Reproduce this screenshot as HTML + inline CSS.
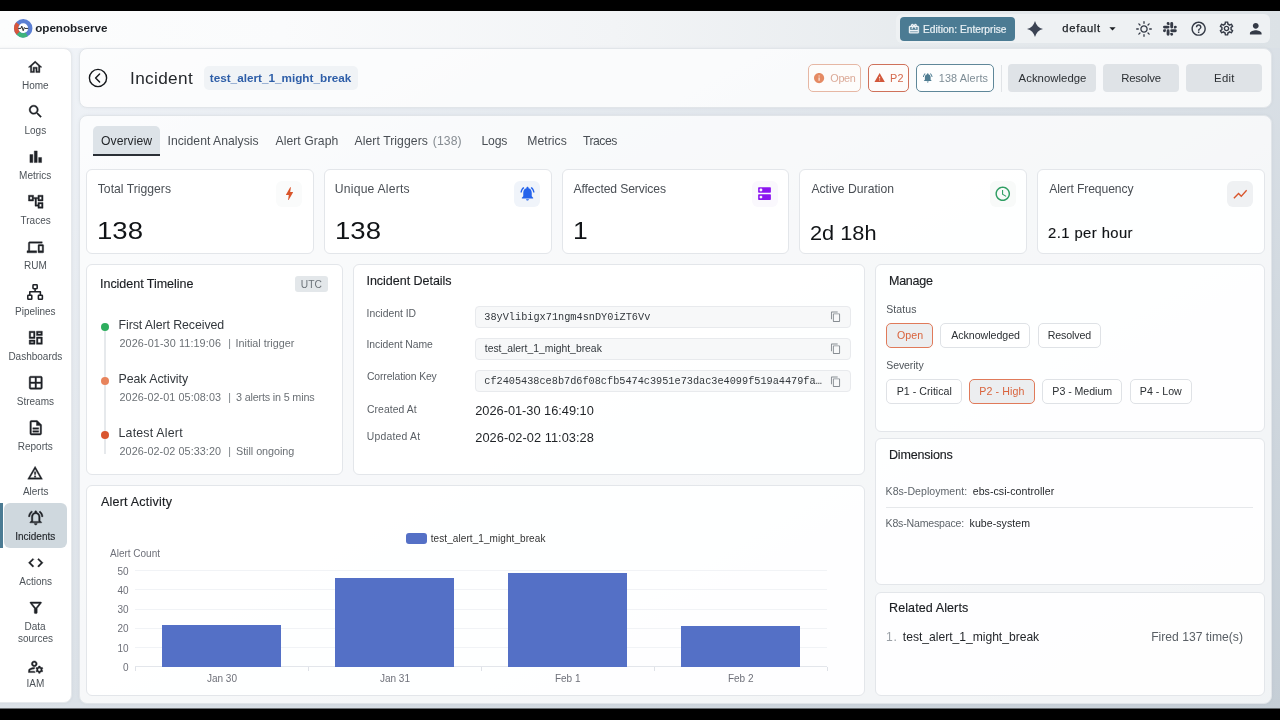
<!DOCTYPE html>
<html lang="en">
<head>
<meta charset="utf-8">
<title>Incident - OpenObserve</title>
<style>
html,body{margin:0;padding:0;background:#000;}
body{width:1280px;height:720px;overflow:hidden;font-family:"Liberation Sans",Arial,sans-serif;}
#app{will-change:transform;position:relative;width:1280px;height:720px;overflow:hidden;background:#000;}
.b{position:absolute;box-sizing:border-box;}
.i{position:absolute;display:block;overflow:visible;}
.t{position:absolute;white-space:nowrap;line-height:1.2;margin:0;padding:0;font-weight:400;}
.card{background:rgba(255,255,255,.9);border:1px solid #e3e6ea;border-radius:6px;}
.btn{border-radius:5px;border:1px solid #dfe2e6;background:#fff;}

</style>
</head>
<body>
<div id="app">
<div class="b " style="left:0px;top:11px;width:1280px;height:698px;background:linear-gradient(150deg,#f2f5f9 0%,#c5ced6 100%);"></div>
<div class="b " style="left:0px;top:11px;width:1280px;height:37px;background:linear-gradient(90deg,#fcfdfd 0%,#fafbfc 22%,#f2f4f6 48%,#e7ebee 72%,#dce2e6 100%);"></div>
<div class="b " style="left:896px;top:14px;width:374px;height:29px;background:#eef1f3;border-radius:6px;"></div>
<svg class="i" style="left:14.1px;top:19.4px" width="18.4" height="18.4" viewBox="0 0 40 40">
<circle cx="20" cy="20" r="15.4" fill="#fff"/>
<circle cx="20" cy="20" r="15.4" fill="none" stroke="#5b7fd3" stroke-width="9.5"/>
<path d="M8.2 10.1 A15.4 15.4 0 0 0 9.1 30.9" fill="none" stroke="#d9563a" stroke-width="9.5"/>
<path d="M9.1 30.9 A15.4 15.4 0 0 0 27.7 33.3" fill="none" stroke="#3fb47c" stroke-width="9.5"/>
<path d="M10 20.5h5l2-5 3 10 2.5-7 1.5 2h6" fill="none" stroke="#1a1a1a" stroke-width="2" stroke-linejoin="round" stroke-linecap="round"/>
</svg>
<span class="t" style="left:35.20px;top:20.60px;font-size:11.7px;color:#1c2025;font-weight:700;letter-spacing:-0.045px;">openobserve</span>
<div class="b " style="left:900px;top:17px;width:115px;height:23.5px;background:#4b7b93;border-radius:4px;"></div>
<svg class="i" style="left:908.1px;top:23.1px" width="11.8" height="11.8" viewBox="0 0 24 24" fill="#eef4f7" stroke="#eef4f7" stroke-width="0.7"><path d="M20 6h-2.18c.11-.31.18-.65.18-1 0-1.66-1.34-3-3-3-1.05 0-1.96.54-2.5 1.35l-.5.67-.5-.68C10.960 2.540 10.050 2 9 2 7.340 2 6 3.340 6 5c0 .35.070.69.180 1H4c-1.110 0-1.990.890-1.990 2L2 19c0 1.110.890 2 2 2h16c1.110 0 2-.890 2-2V8c0-1.110-.890-2-2-2zm-5-2c.55 0 1 .45 1 1s-.45 1-1 1-1-.45-1-1 .45-1 1-1zM9 4c.55 0 1 .45 1 1s-.45 1-1 1-1-.45-1-1 .45-1 1-1zm11 15H4v-2h16v2zm0-5H4V8h5.080L7 10.830 8.620 12 11 8.760l1-1.360 1 1.360L15.380 12 17 10.830 14.920 8H20v6z"/></svg>
<span class="t" style="left:923.05px;top:23.70px;font-size:10.22px;color:#eaf1f5;-webkit-text-stroke:0.2px #eaf1f5;letter-spacing:-0.003px;">Edition: Enterprise</span>
<svg class="i" style="left:1027.3px;top:20.7px" width="16" height="16" viewBox="0 0 24 24" fill="#3b4353"><path d="M12 0 C13.6 6.3 17.7 10.4 24 12 C17.7 13.6 13.6 17.7 12 24 C10.4 17.7 6.3 13.6 0 12 C6.3 10.4 10.4 6.3 12 0Z"/></svg>
<span class="t" style="left:1062.25px;top:22.40px;font-size:11.2px;color:#1b1e23;-webkit-text-stroke:0.25px #1b1e23;letter-spacing:0.717px;">default</span>
<svg class="i" style="left:1105.3px;top:20.8px" width="15" height="15" viewBox="0 0 24 24" fill="#1b1e23" ><path d="M7 10l5 5 5-5z"/></svg>
<svg class="i" style="left:1135.9px;top:20.5px" width="16" height="16" viewBox="-8 -8 16 16" fill="none" stroke="#343a46" stroke-width="1.3" stroke-linecap="round"><circle r="3.1"/><path d="M0 -5.7V-7.3M0 5.7V7.3M-5.7 0H-7.3M5.7 0H7.3M4.03 -4.03L5.16 -5.16M-4.03 -4.03L-5.16 -5.16M4.03 4.03L5.16 5.16M-4.03 4.03L-5.16 5.16"/></svg>
<svg class="i" style="left:1163.1px;top:21.6px" width="13.8" height="13.8" viewBox="0 0 24 24" fill="#343a46"><path d="M5.042 15.165a2.528 2.528 0 0 1-2.52 2.523A2.528 2.528 0 0 1 0 15.165a2.527 2.527 0 0 1 2.522-2.52h2.52v2.52zM6.313 15.165a2.527 2.527 0 0 1 2.521-2.52 2.527 2.527 0 0 1 2.521 2.52v6.313A2.528 2.528 0 0 1 8.834 24a2.528 2.528 0 0 1-2.521-2.522v-6.313zM8.834 5.042a2.528 2.528 0 0 1-2.521-2.52A2.528 2.528 0 0 1 8.834 0a2.528 2.528 0 0 1 2.521 2.522v2.52H8.834zM8.834 6.313a2.528 2.528 0 0 1 2.521 2.521 2.528 2.528 0 0 1-2.521 2.521H2.522A2.528 2.528 0 0 1 0 8.834a2.528 2.528 0 0 1 2.522-2.521h6.312zM18.956 8.834a2.528 2.528 0 0 1 2.522-2.521A2.528 2.528 0 0 1 24 8.834a2.528 2.528 0 0 1-2.522 2.521h-2.522V8.834zM17.688 8.834a2.528 2.528 0 0 1-2.523 2.521 2.527 2.527 0 0 1-2.52-2.521V2.522A2.527 2.527 0 0 1 15.165 0a2.528 2.528 0 0 1 2.523 2.522v6.312zM15.165 18.956a2.528 2.528 0 0 1 2.523 2.522A2.528 2.528 0 0 1 15.165 24a2.527 2.527 0 0 1-2.52-2.522v-2.522h2.52zM15.165 17.688a2.527 2.527 0 0 1-2.52-2.523 2.526 2.526 0 0 1 2.52-2.520h6.313A2.527 2.527 0 0 1 24 15.165a2.528 2.528 0 0 1-2.522 2.523h-6.313z"/></svg>
<svg class="i" style="left:1190.1px;top:19.85px" width="17.3" height="17.3" viewBox="0 0 24 24" fill="#343a46" ><path d="M11 18h2v-2h-2v2zm1-16C6.48 2 2 6.48 2 12s4.48 10 10 10 10-4.48 10-10S17.52 2 12 2zm0 18c-4.41 0-8-3.59-8-8s3.59-8 8-8 8 3.59 8 8-3.59 8-8 8zm0-14c-2.21 0-4 1.79-4 4h2c0-1.1.9-2 2-2s2 .9 2 2c0 2-3 1.75-3 5h2c0-2.25 3-2.5 3-5 0-2.21-1.79-4-4-4z"/></svg>
<svg class="i" style="left:1218.4px;top:20.0px" width="17" height="17" viewBox="0 0 24 24" fill="#343a46" ><path d="M19.43 12.98c.04-.32.07-.64.07-.98 0-.34-.03-.66-.07-.98l2.11-1.65c.19-.15.24-.42.12-.64l-2-3.46c-.09-.16-.26-.25-.44-.25-.06 0-.12.01-.17.03l-2.49 1c-.52-.4-1.08-.73-1.69-.98l-.38-2.65C14.46 2.18 14.25 2 14 2h-4c-.25 0-.46.18-.49.42l-.38 2.65c-.61.25-1.17.59-1.69.98l-2.49-1c-.06-.02-.12-.03-.18-.03-.17 0-.34.09-.43.25l-2 3.46c-.13.22-.07.49.12.64l2.11 1.65c-.04.32-.07.65-.07.98 0 .33.03.66.07.98l-2.11 1.65c-.19.15-.24.42-.12.64l2 3.46c.09.16.26.25.44.25.06 0 .12-.01.17-.03l2.49-1c.52.4 1.08.73 1.69.98l.38 2.65c.03.24.24.42.49.42h4c.25 0 .46-.18.49-.42l.38-2.65c.61-.25 1.17-.59 1.69-.98l2.49 1c.06.02.12.03.18.03.17 0 .34-.09.43-.25l2-3.46c.12-.22.07-.49-.12-.64l-2.11-1.65zm-1.98-1.71c.04.31.05.52.05.73 0 .21-.02.43-.05.73l-.14 1.13.89.7 1.08.84-.7 1.21-1.27-.51-1.04-.42-.9.68c-.43.32-.84.56-1.25.73l-1.06.43-.16 1.13-.2 1.35h-1.4l-.19-1.35-.16-1.13-1.06-.43c-.43-.18-.83-.41-1.23-.71l-.91-.7-1.06.43-1.27.51-.7-1.21 1.08-.84.89-.7-.14-1.13c-.03-.31-.05-.54-.05-.74s.02-.43.05-.73l.14-1.13-.89-.7-1.08-.84.7-1.21 1.27.51 1.04.42.9-.68c.43-.32.84-.56 1.25-.73l1.06-.43.16-1.13.2-1.35h1.39l.19 1.35.16 1.13 1.06.43c.43.18.83.41 1.23.71l.91.7 1.06-.43 1.27-.51.7 1.21-1.07.85-.89.7.14 1.13zM12 8c-2.21 0-4 1.79-4 4s1.79 4 4 4 4-1.79 4-4-1.79-4-4-4zm0 6c-1.1 0-2-.9-2-2s.9-2 2-2 2 .9 2 2-.9 2-2 2z"/></svg>
<svg class="i" style="left:1246.85px;top:19.75px" width="17.5" height="17.5" viewBox="0 0 24 24" fill="#343a46" ><path d="M12 12c2.21 0 4-1.79 4-4s-1.79-4-4-4-4 1.79-4 4 1.79 4 4 4zm0 2c-2.67 0-8 1.34-8 4v2h16v-2c0-2.66-5.33-4-8-4z"/></svg>
<div class="b " style="left:-8px;top:48px;width:79.5px;height:655px;background:#fff;border-radius:8px;border:1px solid #e6e9ec;box-shadow:0 0 3px rgba(120,135,150,.12);"></div>
<div class="b " style="left:4px;top:503.3px;width:62.7px;height:44.4px;background:#cfd8de;border-radius:6px;"></div>
<div class="b " style="left:0px;top:503.3px;width:3.2px;height:44.4px;background:#4b7b93;"></div>
<svg class="i" style="left:27.35px;top:58.65px" width="16.3" height="16.3" viewBox="0 0 24 24" fill="#1e2126" stroke="#1e2126" stroke-width="0.55" stroke-linejoin="round"><path d="M12 5.69l5 4.5V18h-2v-6H9v6H7v-7.81l5-4.5M12 3L2 12h3v8h6v-6h2v6h6v-8h3L12 3z"/></svg>
<span class="t" style="left:22.00px;top:80.00px;font-size:10px;color:#4d5359;">Home</span>
<svg class="i" style="left:27.0px;top:103.4px" width="17" height="17" viewBox="0 0 24 24" fill="#1e2126" stroke="#1e2126" stroke-width="0.55" stroke-linejoin="round"><path d="M15.5 14h-.79l-.28-.27C15.41 12.59 16 11.11 16 9.5 16 5.91 13.09 3 9.5 3S3 5.91 3 9.5 5.91 16 9.5 16c1.61 0 3.09-.59 4.23-1.57l.27.28v.79l5 4.99L20.49 19l-4.99-5zm-6 0C7.01 14 5 11.99 5 9.5S7.01 5 9.5 5 14 7.01 14 9.5 11.99 14 9.5 14z"/></svg>
<span class="t" style="left:24.50px;top:125.10px;font-size:10px;color:#4d5359;">Logs</span>
<svg class="i" style="left:26.75px;top:148.25px" width="17.5" height="17.5" viewBox="0 0 24 24" fill="#1e2126" stroke="#1e2126" stroke-width="0.55" stroke-linejoin="round"><path d="M4 9h4v11H4zm12 4h4v7h-4zm-6-9h4v16h-4z"/></svg>
<span class="t" style="left:19.12px;top:170.20px;font-size:10px;color:#4d5359;">Metrics</span>
<svg class="i" style="left:26.75px;top:193.35px" width="17.5" height="17.5" viewBox="0 0 24 24" fill="#1e2126" stroke="#1e2126" stroke-width="0.55" stroke-linejoin="round"><path d="M22 11V3h-7v3H9V3H2v8h7V8h2v10h4v3h7v-8h-7v3h-2V8h2v3h7zM7 9H4V5h3v4zm10 6h3v4h-3v-4zm0-10h3v4h-3V5z"/></svg>
<span class="t" style="left:20.50px;top:215.30px;font-size:10px;color:#4d5359;">Traces</span>
<svg class="i" style="left:27.2px;top:238.9px" width="16.6" height="16.6" viewBox="0 0 24 24" fill="#1e2126" stroke="#1e2126" stroke-width="0.55" stroke-linejoin="round"><path d="M4 6h18V4H4c-1.1 0-2 .9-2 2v11H0v3h14v-3H4V6zm19 2h-6c-.55 0-1 .45-1 1v10c0 .55.45 1 1 1h6c.55 0 1-.45 1-1V9c0-.55-.45-1-1-1zm-1 9h-4v-7h4v7z"/></svg>
<span class="t" style="left:24.12px;top:260.40px;font-size:10px;color:#4d5359;">RUM</span>
<svg class="i" style="left:27.45px;top:284.10px" width="16.2" height="16.2" viewBox="0 0 16.2 16.2" fill="none" stroke="#1e2126" stroke-width="1.55" stroke-linejoin="round"><rect x="6" y="0.8" width="4.2" height="3.9" rx="0.6"/><rect x="0.8" y="11.2" width="4" height="4.1" rx="0.6"/><rect x="11.4" y="11.2" width="4" height="4.1" rx="0.6"/><path d="M8.1 4.7V7.75M2.8 11.2V7.75H13.4V11.2"/></svg>
<span class="t" style="left:15.00px;top:305.50px;font-size:10px;color:#4d5359;">Pipelines</span>
<svg class="i" style="left:26.75px;top:328.65px" width="17.5" height="17.5" viewBox="0 0 24 24" fill="#1e2126" stroke="#1e2126" stroke-width="0.55" stroke-linejoin="round"><path d="M19 5v2h-4V5h4M9 5v6H5V5h4m10 8v6h-4v-6h4M9 17v2H5v-2h4M21 3h-8v6h8V3zM11 3H3v10h8V3zm10 8h-8v10h8V11zm-10 4H3v6h8v-6z"/></svg>
<span class="t" style="left:8.38px;top:350.60px;font-size:10px;color:#4d5359;">Dashboards</span>
<svg class="i" style="left:26.75px;top:373.75px" width="17.5" height="17.5" viewBox="0 0 24 24" fill="#1e2126" stroke="#1e2126" stroke-width="0.55" stroke-linejoin="round"><path d="M19 3H5c-1.1 0-2 .9-2 2v14c0 1.1.9 2 2 2h14c1.1 0 2-.9 2-2V5c0-1.1-.9-2-2-2zm0 8h-6V5h6v6zm-8-6v6H5V5h6zm-6 8h6v6H5v-6zm8 6v-6h6v6h-6z"/></svg>
<span class="t" style="left:16.75px;top:395.70px;font-size:10px;color:#4d5359;">Streams</span>
<svg class="i" style="left:26.75px;top:418.85px" width="17.5" height="17.5" viewBox="0 0 24 24" fill="#1e2126" stroke="#1e2126" stroke-width="0.55" stroke-linejoin="round"><path d="M8 16h8v2H8zm0-4h8v2H8zm6-10H6c-1.1 0-2 .9-2 2v16c0 1.1.89 2 1.99 2H18c1.1 0 2-.9 2-2V8l-6-6zm4 18H6V4h7v5h5v11z"/></svg>
<span class="t" style="left:17.75px;top:440.80px;font-size:10px;color:#4d5359;">Reports</span>
<svg class="i" style="left:27.4px;top:464.6px" width="16.2" height="16.2" viewBox="0 0 24 24" fill="#1e2126" stroke="#1e2126" stroke-width="0.55" stroke-linejoin="round"><path d="M12 5.99L19.53 19H4.47L12 5.99M12 2L1 21h22L12 2zm1 14h-2v2h2v-2zm0-6h-2v4h2v-4z"/></svg>
<span class="t" style="left:22.88px;top:485.90px;font-size:10px;color:#4d5359;">Alerts</span>
<svg class="i" style="left:26.75px;top:509.05px" width="17.5" height="17.5" viewBox="0 0 24 24" fill="#1e2126" stroke="#1e2126" stroke-width="0.55" stroke-linejoin="round"><path d="M12 22c1.1 0 2-.9 2-2h-4c0 1.1.9 2 2 2zm6-6v-5c0-3.07-1.63-5.64-4.5-6.32V4c0-.83-.67-1.5-1.5-1.5s-1.5.67-1.5 1.5v.68C7.64 5.36 6 7.92 6 11v5l-2 2v1h16v-1l-2-2zm-2 1H8v-6c0-2.48 1.51-4.5 4-4.5s4 2.02 4 4.5v6zM7.58 4.08L6.15 2.65C3.75 4.48 2.17 7.3 2.03 10.5h2c.15-2.65 1.51-4.97 3.55-6.42zm12.39 6.42h2c-.15-3.2-1.73-6.02-4.12-7.85l-1.42 1.43c2.02 1.45 3.39 3.77 3.54 6.42z"/></svg>
<span class="t" style="left:15.25px;top:531.00px;font-size:10px;color:#24282d;-webkit-text-stroke:0.15px #24282d;">Incidents</span>
<svg class="i" style="left:26.75px;top:554.15px" width="17.5" height="17.5" viewBox="0 0 24 24" fill="#1e2126" stroke="#1e2126" stroke-width="0.55" stroke-linejoin="round"><path d="M9.4 16.6L4.8 12l4.6-4.6L8 6l-6 6 6 6 1.4-1.4zm5.2 0l4.6-4.6-4.6-4.6L16 6l6 6-6 6-1.4-1.4z"/></svg>
<span class="t" style="left:19.25px;top:576.10px;font-size:10px;color:#4d5359;">Actions</span>
<svg class="i" style="left:26.75px;top:599.25px" width="17.5" height="17.5" viewBox="0 0 24 24" fill="#1e2126" stroke="#1e2126" stroke-width="0.55" stroke-linejoin="round"><path d="M7 6h10l-5.01 6.3L7 6zm-2.75-.39C6.27 8.2 10 13 10 13v6c0 .55.45 1 1 1h2c.55 0 1-.45 1-1v-6s3.72-4.8 5.74-7.39c.51-.66.04-1.61-.79-1.61H5.04c-.83 0-1.3.95-.79 1.61z"/></svg>
<span class="t" style="left:24.50px;top:621.20px;font-size:10px;color:#4d5359;">Data</span>
<span class="t" style="left:18.00px;top:633.00px;font-size:10px;color:#4d5359;">sources</span>
<svg class="i" style="left:26.75px;top:657.95px" width="17.5" height="17.5" viewBox="0 0 24 24" fill="#1e2126" stroke="#1e2126" stroke-width="0.55" stroke-linejoin="round"><path d="M4 18v-.65c0-.34.16-.66.41-.81C6.1 15.53 8.03 15 10 15c.03 0 .05 0 .08.01.1-.7.3-1.37.59-1.98-.22-.02-.44-.03-.67-.03-2.42 0-4.68.67-6.61 1.82-.88.52-1.39 1.5-1.39 2.53V20h9.26c-.42-.6-.75-1.28-.97-2H4zM10 12c2.21 0 4-1.79 4-4s-1.79-4-4-4-4 1.79-4 4 1.79 4 4 4zm0-6c1.1 0 2 .9 2 2s-.9 2-2 2-2-.9-2-2 .9-2 2-2zM20.75 16c0-.22-.03-.42-.06-.63l1.14-1.01-1-1.73-1.45.49c-.32-.27-.68-.48-1.08-.63L18 11h-2l-.3 1.49c-.4.15-.76.36-1.08.63l-1.45-.49-1 1.73 1.14 1.01c-.03.21-.06.41-.06.63s.03.42.06.63l-1.14 1.01 1 1.73 1.45-.49c.32.27.68.48 1.08.63L16 21h2l.3-1.49c.4-.15.76-.36 1.08-.63l1.45.49 1-1.73-1.14-1.01c.03-.21.06-.41.06-.63zM17 18c-1.1 0-2-.9-2-2s.9-2 2-2 2 .9 2 2-.9 2-2 2z"/></svg>
<span class="t" style="left:26.50px;top:678.10px;font-size:10px;color:#4d5359;">IAM</span>
<div class="b " style="left:79px;top:48px;width:1193px;height:60px;background:rgba(255,255,255,.8);border-radius:8px;border:1px solid #e1e5e9;box-shadow:0 0 3px rgba(120,135,150,.10);"></div>
<svg class="i" style="left:88px;top:67.7px" width="20" height="20" viewBox="0 0 20 20"><circle cx="10" cy="10" r="8.6" fill="none" stroke="#15181c" stroke-width="1.4"/><path d="M11.6 5.9 L7.6 10 L11.6 14.1" fill="none" stroke="#15181c" stroke-width="1.45" stroke-linecap="round" stroke-linejoin="round"/></svg>
<span class="t" style="left:130.00px;top:67.50px;font-size:17.2px;color:#24272b;letter-spacing:0.357px;">Incident</span>
<div class="b " style="left:203.75px;top:65.6px;width:154.25px;height:24.1px;background:#f0f3f6;border-radius:5px;"></div>
<span class="t" style="left:209.75px;top:70.90px;font-size:11.74px;color:#2e5ea8;font-weight:700;">test_alert_1_might_break</span>
<div class="b " style="left:808px;top:64.3px;width:53px;height:27.7px;border:1px solid #e6b7a4;border-radius:5px;background:#fdfcfb;"></div>
<svg class="i" style="left:813.1px;top:71.9px" width="12.2" height="12.2" viewBox="0 0 24 24" fill="#e58a63" ><path d="M12 2C6.48 2 2 6.48 2 12s4.48 10 10 10 10-4.48 10-10S17.52 2 12 2zm1 15h-2v-6h2v6zm0-8h-2V7h2v2z"/></svg>
<span class="t" style="left:830.30px;top:71.60px;font-size:10.85px;color:#dba997;letter-spacing:-0.350px;">Open</span>
<div class="b " style="left:868.1px;top:64.3px;width:40.7px;height:27.7px;border:1px solid #cf715a;border-radius:5px;background:#fdfcfb;"></div>
<svg class="i" style="left:874.25px;top:72.25px" width="11.3" height="11.3" viewBox="0 0 24 24" fill="#d2573a" ><path d="M1 21h22L12 2 1 21zm12-3h-2v-2h2v2zm0-4h-2v-4h2v4z"/></svg>
<span class="t" style="left:890.00px;top:71.60px;font-size:10.85px;color:#d4694d;letter-spacing:0.250px;">P2</span>
<div class="b " style="left:916px;top:64.3px;width:77.9px;height:27.7px;border:1px solid #5f8799;border-radius:5px;background:#fdfefe;"></div>
<svg class="i" style="left:922.25px;top:72.25px" width="11.5" height="11.5" viewBox="0 0 24 24" fill="#4f7d92" ><path d="M7.58 4.08L6.15 2.65C3.75 4.48 2.17 7.3 2.03 10.5h2c.15-2.65 1.51-4.97 3.55-6.42zm12.39 6.42h2c-.15-3.2-1.73-6.02-4.12-7.85l-1.42 1.43c2.02 1.45 3.39 3.77 3.54 6.42zM18 11c0-3.07-1.64-5.64-4.5-6.32V4c0-.83-.67-1.5-1.5-1.5s-1.5.67-1.5 1.5v.68C7.63 5.36 6 7.92 6 11v5l-2 2v1h16v-1l-2-2v-5zm-6 11c.14 0 .27-.01.4-.04.65-.14 1.18-.58 1.44-1.18.1-.24.15-.5.15-.78h-4c.01 1.1.9 2 2.01 2z"/></svg>
<span class="t" style="left:938.75px;top:71.60px;font-size:10.85px;color:#7d8c95;letter-spacing:0.111px;">138 Alerts</span>
<div class="b " style="left:1001px;top:64.5px;width:1px;height:27.0px;background:#e1e4e7;"></div>
<div class="b " style="left:1008.2px;top:64.3px;width:87.8px;height:27.4px;background:#dfe3e7;border-radius:4px;"></div>
<span class="t" style="left:1018.60px;top:71.60px;font-size:11.35px;color:#2b2f33;letter-spacing:0.030px;">Acknowledge</span>
<div class="b " style="left:1103px;top:64.3px;width:75.8px;height:27.4px;background:#dfe3e7;border-radius:4px;"></div>
<span class="t" style="left:1121.20px;top:71.60px;font-size:11.35px;color:#2b2f33;letter-spacing:-0.183px;">Resolve</span>
<div class="b " style="left:1186.2px;top:64.3px;width:75.8px;height:27.4px;background:#dfe3e7;border-radius:4px;"></div>
<span class="t" style="left:1214.10px;top:71.60px;font-size:11.35px;color:#2b2f33;letter-spacing:0.233px;">Edit</span>
<div class="b " style="left:79px;top:115px;width:1193px;height:589px;background:rgba(255,255,255,.76);border-radius:8px;border:1px solid #e1e5e9;box-shadow:0 0 3px rgba(120,135,150,.10);"></div>
<div class="b " style="left:93px;top:126px;width:67px;height:29.5px;background:#dde3e8;border-radius:5px 5px 0 0;border-bottom:2.5px solid #2a2f36;"></div>
<span class="t" style="left:101.00px;top:133.80px;font-size:12.18px;color:#24272b;letter-spacing:0.036px;">Overview</span>
<span class="t" style="left:167.50px;top:133.80px;font-size:12.18px;color:#4a4f55;letter-spacing:0.031px;">Incident Analysis</span>
<span class="t" style="left:275.50px;top:133.80px;font-size:12.18px;color:#4a4f55;letter-spacing:0.050px;">Alert Graph</span>
<span class="t" style="left:354.50px;top:133.80px;font-size:12.18px;color:#4a4f55;letter-spacing:0.077px;">Alert Triggers</span>
<span class="t" style="left:432.75px;top:133.80px;font-size:12.18px;color:#858b91;letter-spacing:0.125px;">(138)</span>
<span class="t" style="left:481.50px;top:133.80px;font-size:12.18px;color:#4a4f55;letter-spacing:-0.167px;">Logs</span>
<span class="t" style="left:527.25px;top:133.80px;font-size:12.18px;color:#4a4f55;letter-spacing:0.042px;">Metrics</span>
<span class="t" style="left:583.00px;top:133.80px;font-size:12.18px;color:#4a4f55;letter-spacing:-0.500px;">Traces</span>
<div class="b card" style="left:86px;top:169px;width:228px;height:85px;"></div>
<span class="t" style="left:97.75px;top:182.00px;font-size:12.16px;color:#4a4f55;letter-spacing:0.019px;">Total Triggers</span>
<span class="t" style="left:97.48px;top:215.75px;font-size:24.5px;color:#111417;transform:scaleX(1.1250);transform-origin:0 0;">138</span>
<div class="b " style="left:276.25px;top:181px;width:26.0px;height:25.5px;background:#fafbfb;border-radius:6px;"></div>
<svg class="i" style="left:280.75px;top:185.25px" width="17" height="17" viewBox="0 0 24 24" fill="#d9552b" ><path d="M11 21h-1l1-7H7.5c-.58 0-.57-.32-.38-.66.19-.34.05-.08.07-.12C8.48 10.94 10.42 7.54 13 3h1l-1 7h3.5c.49 0 .56.33.47.51l-.07.15C12.96 17.55 11 21 11 21z"/></svg>
<div class="b card" style="left:324px;top:169px;width:228px;height:85px;"></div>
<span class="t" style="left:334.80px;top:182.00px;font-size:12.16px;color:#4a4f55;letter-spacing:0.208px;">Unique Alerts</span>
<span class="t" style="left:335.28px;top:215.75px;font-size:24.5px;color:#111417;transform:scaleX(1.1250);transform-origin:0 0;">138</span>
<div class="b " style="left:514.05px;top:181px;width:26.0px;height:25.5px;background:#f0f4fa;border-radius:6px;"></div>
<svg class="i" style="left:518.55px;top:185.25px" width="17" height="17" viewBox="0 0 24 24" fill="#2563eb" ><path d="M7.58 4.08L6.15 2.65C3.75 4.48 2.17 7.3 2.03 10.5h2c.15-2.65 1.51-4.97 3.55-6.42zm12.39 6.42h2c-.15-3.2-1.73-6.02-4.12-7.85l-1.42 1.43c2.02 1.45 3.39 3.77 3.54 6.42zM18 11c0-3.07-1.64-5.64-4.5-6.32V4c0-.83-.67-1.5-1.5-1.5s-1.5.67-1.5 1.5v.68C7.63 5.36 6 7.92 6 11v5l-2 2v1h16v-1l-2-2v-5zm-6 11c.14 0 .27-.01.4-.04.65-.14 1.18-.58 1.44-1.18.1-.24.15-.5.15-.78h-4c.01 1.1.9 2 2.01 2z"/></svg>
<div class="b card" style="left:562px;top:169px;width:227px;height:85px;"></div>
<span class="t" style="left:573.60px;top:182.00px;font-size:12.16px;color:#4a4f55;letter-spacing:-0.125px;">Affected Services</span>
<span class="t" style="left:573.16px;top:215.75px;font-size:24.5px;color:#111417;transform:scaleX(1.0800);transform-origin:0 0;">1</span>
<div class="b " style="left:751.85px;top:181px;width:26.0px;height:25.5px;background:#faf8fd;border-radius:6px;"></div>
<svg class="i" style="left:756.35px;top:185.25px" width="17" height="17" viewBox="0 0 24 24" fill="#8b14f0" ><path d="M20 13H4c-.55 0-1 .45-1 1v6c0 .55.45 1 1 1h16c.55 0 1-.45 1-1v-6c0-.55-.45-1-1-1zM7 19c-1.1 0-2-.9-2-2s.9-2 2-2 2 .9 2 2-.9 2-2 2zM20 3H4c-.55 0-1 .45-1 1v6c0 .55.45 1 1 1h16c.55 0 1-.45 1-1V4c0-.55-.45-1-1-1zM7 9c-1.1 0-2-.9-2-2s.9-2 2-2 2 .9 2 2-.9 2-2 2z"/></svg>
<div class="b card" style="left:799px;top:169px;width:228px;height:85px;"></div>
<span class="t" style="left:811.40px;top:182.00px;font-size:12.16px;color:#4a4f55;letter-spacing:0.018px;">Active Duration</span>
<span class="t" style="left:810.38px;top:221.50px;font-size:19.4px;color:#111417;transform:scaleX(1.1211);transform-origin:0 0;">2d 18h</span>
<div class="b " style="left:989.6500000000001px;top:181px;width:26.0px;height:25.5px;background:#f8faf9;border-radius:6px;"></div>
<svg class="i" style="left:993.9px;top:185.0px" width="17.5" height="17.5" viewBox="0 0 24 24" fill="#2f9e63" ><path d="M11.99 2C6.47 2 2 6.48 2 12s4.47 10 9.99 10C17.52 22 22 17.52 22 12S17.52 2 11.99 2zM12 20c-4.42 0-8-3.58-8-8s3.58-8 8-8 8 3.58 8 8-3.58 8-8 8zm.5-13H11v6l5.25 3.15.75-1.23-4.5-2.67z"/></svg>
<div class="b card" style="left:1037px;top:169px;width:228px;height:85px;"></div>
<span class="t" style="left:1049.20px;top:182.00px;font-size:12.16px;color:#4a4f55;letter-spacing:-0.107px;">Alert Frequency</span>
<span class="t" style="left:1048.00px;top:225.20px;font-size:14.8px;color:#111417;-webkit-text-stroke:0.15px #111417;letter-spacing:0.432px;">2.1 per hour</span>
<div class="b " style="left:1227.45px;top:181px;width:26.0px;height:25.5px;background:#eff1f3;border-radius:6px;"></div>
<svg class="i" style="left:1232.2px;top:185.5px" width="16.5" height="16.5" viewBox="0 0 24 24" fill="#d9552b" ><path d="M3.5 18.49l6-6.01 4 4L22 6.92l-1.41-1.41-7.09 7.97-4-4L2 16.99z"/></svg>
<div class="b card" style="left:86px;top:264px;width:257px;height:211px;"></div>
<span class="t" style="left:100.00px;top:277.00px;font-size:12.53px;color:#1b1e22;-webkit-text-stroke:0.15px #1b1e22;letter-spacing:-0.031px;">Incident Timeline</span>
<div class="b " style="left:295px;top:275.5px;width:33px;height:16.25px;background:#e3e7ea;border-radius:3px;"></div>
<span class="t" style="left:300.75px;top:278.50px;font-size:10.24px;color:#6b7278;">UTC</span>
<div class="b " style="left:104px;top:327px;width:2px;height:126.5px;background:#e6e9ec;"></div>
<div class="b " style="left:100.5px;top:322.75px;width:8.5px;height:8.5px;background:#2eae5e;border-radius:50%;"></div>
<span class="t" style="left:118.50px;top:317.75px;font-size:12.37px;color:#33383d;letter-spacing:-0.079px;">First Alert Received</span>
<span class="t" style="left:119.50px;top:337.00px;font-size:10.81px;color:#6b7075;letter-spacing:0.111px;">2026-01-30 11:19:06</span>
<span class="t" style="left:228.22px;top:336.60px;font-size:10.5px;color:#7b8086;">|</span>
<span class="t" style="left:235.50px;top:337.00px;font-size:10.81px;color:#6b7075;">Initial trigger</span>
<div class="b " style="left:100.5px;top:376.75px;width:8.5px;height:8.5px;background:#e8845c;border-radius:50%;"></div>
<span class="t" style="left:118.50px;top:371.75px;font-size:12.37px;color:#33383d;letter-spacing:-0.042px;">Peak Activity</span>
<span class="t" style="left:119.50px;top:391.00px;font-size:10.81px;color:#6b7075;letter-spacing:0.069px;">2026-02-01 05:08:03</span>
<span class="t" style="left:228.22px;top:390.60px;font-size:10.5px;color:#7b8086;">|</span>
<span class="t" style="left:236.00px;top:391.00px;font-size:10.81px;color:#6b7075;letter-spacing:-0.176px;">3 alerts in 5 mins</span>
<div class="b " style="left:100.5px;top:430.75px;width:8.5px;height:8.5px;background:#d9562f;border-radius:50%;"></div>
<span class="t" style="left:118.50px;top:425.75px;font-size:12.37px;color:#33383d;letter-spacing:0.205px;">Latest Alert</span>
<span class="t" style="left:119.50px;top:445.00px;font-size:10.81px;color:#6b7075;letter-spacing:0.069px;">2026-02-02 05:33:20</span>
<span class="t" style="left:228.22px;top:444.60px;font-size:10.5px;color:#7b8086;">|</span>
<span class="t" style="left:236.00px;top:445.00px;font-size:10.81px;color:#6b7075;letter-spacing:-0.042px;">Still ongoing</span>
<div class="b card" style="left:353px;top:264px;width:512px;height:211px;"></div>
<span class="t" style="left:366.50px;top:273.50px;font-size:12.53px;color:#1b1e22;-webkit-text-stroke:0.15px #1b1e22;letter-spacing:-0.033px;">Incident Details</span>
<span class="t" style="left:366.50px;top:307.75px;font-size:10.39px;color:#5a5f65;">Incident ID</span>
<span class="t" style="left:366.50px;top:339.25px;font-size:10.39px;color:#5a5f65;letter-spacing:-0.042px;">Incident Name</span>
<span class="t" style="left:367.00px;top:371.00px;font-size:10.39px;color:#5a5f65;letter-spacing:-0.125px;">Correlation Key</span>
<span class="t" style="left:367.00px;top:404.00px;font-size:10.39px;color:#5a5f65;letter-spacing:0.056px;">Created At</span>
<span class="t" style="left:366.75px;top:430.50px;font-size:10.39px;color:#5a5f65;letter-spacing:0.222px;">Updated At</span>
<div class="b " style="left:475px;top:305.75px;width:375.75px;height:22.0px;background:#f7f8f9;border:1px solid #e8eaed;border-radius:4px;"></div>
<svg class="i" style="left:829.65px;top:311.0px" width="11.5" height="11.5" viewBox="0 0 24 24" fill="#868c92" ><path d="M16 1H4c-1.1 0-2 .9-2 2v14h2V3h12V1zm3 4H8c-1.1 0-2 .9-2 2v14c0 1.1.9 2 2 2h11c1.1 0 2-.9 2-2V7c0-1.1-.9-2-2-2zm0 16H8V7h11v14z"/></svg>
<div class="b " style="left:475px;top:338.0px;width:375.75px;height:22.0px;background:#f7f8f9;border:1px solid #e8eaed;border-radius:4px;"></div>
<svg class="i" style="left:829.65px;top:343.25px" width="11.5" height="11.5" viewBox="0 0 24 24" fill="#868c92" ><path d="M16 1H4c-1.1 0-2 .9-2 2v14h2V3h12V1zm3 4H8c-1.1 0-2 .9-2 2v14c0 1.1.9 2 2 2h11c1.1 0 2-.9 2-2V7c0-1.1-.9-2-2-2zm0 16H8V7h11v14z"/></svg>
<div class="b " style="left:475px;top:370.25px;width:375.75px;height:22.0px;background:#f7f8f9;border:1px solid #e8eaed;border-radius:4px;"></div>
<svg class="i" style="left:829.65px;top:375.5px" width="11.5" height="11.5" viewBox="0 0 24 24" fill="#868c92" ><path d="M16 1H4c-1.1 0-2 .9-2 2v14h2V3h12V1zm3 4H8c-1.1 0-2 .9-2 2v14c0 1.1.9 2 2 2h11c1.1 0 2-.9 2-2V7c0-1.1-.9-2-2-2zm0 16H8V7h11v14z"/></svg>
<span class="t" style="left:484.25px;top:311.00px;font-size:10.25px;color:#33383d;font-family:'Liberation Mono',monospace;">38yVlibigx71ngm4snDY0iZT6Vv</span>
<span class="t" style="left:484.75px;top:343.00px;font-size:10.38px;color:#33383d;">test_alert_1_might_break</span>
<span class="t" style="left:484.25px;top:375.25px;font-size:10.25px;color:#33383d;font-family:'Liberation Mono',monospace;letter-spacing:-0.014px;">cf2405438ce8b7d6f08cfb5474c3951e73dac3e4099f519a4479fa…</span>
<span class="t" style="left:475.25px;top:403.00px;font-size:12.81px;color:#1f2226;letter-spacing:-0.014px;">2026-01-30 16:49:10</span>
<span class="t" style="left:475.25px;top:430.00px;font-size:12.81px;color:#1f2226;letter-spacing:0.042px;">2026-02-02 11:03:28</span>
<div class="b card" style="left:875px;top:264px;width:390px;height:168px;"></div>
<span class="t" style="left:889.00px;top:273.50px;font-size:12.53px;color:#1b1e22;-webkit-text-stroke:0.15px #1b1e22;letter-spacing:-0.270px;">Manage</span>
<span class="t" style="left:886.20px;top:303.40px;font-size:10.53px;color:#4f555b;letter-spacing:0.100px;">Status</span>
<div class="b " style="left:886.4px;top:323.1px;width:46.7px;height:25.3px;background:#eceef0;border:1px solid #e07a5a;border-radius:5px;"></div>
<span class="t" style="left:896.90px;top:329.10px;font-size:10.64px;color:#d9633c;letter-spacing:0.083px;">Open</span>
<div class="b btn" style="left:940.2px;top:323.1px;width:90.2px;height:25.3px;"></div>
<span class="t" style="left:951.25px;top:329.10px;font-size:10.64px;color:#2b2f33;letter-spacing:-0.041px;">Acknowledged</span>
<div class="b btn" style="left:1037.8px;top:323.1px;width:63.2px;height:25.3px;"></div>
<span class="t" style="left:1047.75px;top:329.10px;font-size:10.64px;color:#2b2f33;letter-spacing:-0.121px;">Resolved</span>
<span class="t" style="left:886.20px;top:358.50px;font-size:10.53px;color:#4f555b;letter-spacing:-0.071px;">Severity</span>
<div class="b btn" style="left:886.4px;top:378.9px;width:75.2px;height:25.5px;"></div>
<span class="t" style="left:896.65px;top:385.20px;font-size:10.64px;color:#2b2f33;letter-spacing:0.029px;">P1 - Critical</span>
<div class="b " style="left:969.1px;top:378.9px;width:65.5px;height:25.5px;background:#eceef0;border:1px solid #e07a5a;border-radius:5px;"></div>
<span class="t" style="left:979.35px;top:385.20px;font-size:10.64px;color:#d9633c;letter-spacing:0.094px;">P2 - High</span>
<div class="b btn" style="left:1042px;top:378.9px;width:80.1px;height:25.5px;"></div>
<span class="t" style="left:1052.35px;top:385.20px;font-size:10.64px;color:#2b2f33;letter-spacing:-0.045px;">P3 - Medium</span>
<div class="b btn" style="left:1129.6px;top:378.9px;width:62.9px;height:25.5px;"></div>
<span class="t" style="left:1139.85px;top:385.20px;font-size:10.64px;color:#2b2f33;letter-spacing:-0.007px;">P4 - Low</span>
<div class="b card" style="left:875px;top:438px;width:390px;height:147px;"></div>
<span class="t" style="left:889.00px;top:447.60px;font-size:12.53px;color:#1b1e22;-webkit-text-stroke:0.15px #1b1e22;letter-spacing:-0.189px;">Dimensions</span>
<span class="t" style="left:885.55px;top:485.20px;font-size:10.58px;color:#5f656b;letter-spacing:0.029px;">K8s-Deployment:</span>
<span class="t" style="left:972.70px;top:485.20px;font-size:10.58px;color:#1f2226;letter-spacing:0.056px;">ebs-csi-controller</span>
<div class="b " style="left:886px;top:507.4px;width:367.4px;height:1.0px;background:#e6e8eb;"></div>
<span class="t" style="left:885.55px;top:516.90px;font-size:10.58px;color:#5f656b;letter-spacing:-0.192px;">K8s-Namespace:</span>
<span class="t" style="left:969.55px;top:516.90px;font-size:10.58px;color:#1f2226;letter-spacing:0.050px;">kube-system</span>
<div class="b card" style="left:875px;top:592px;width:390px;height:104px;"></div>
<span class="t" style="left:889.00px;top:601.00px;font-size:12.53px;color:#1b1e22;-webkit-text-stroke:0.15px #1b1e22;letter-spacing:0.100px;">Related Alerts</span>
<span class="t" style="left:886.10px;top:629.50px;font-size:12.14px;color:#9aa0a6;letter-spacing:0.600px;">1.</span>
<span class="t" style="left:902.85px;top:629.50px;font-size:12.14px;color:#1f2226;letter-spacing:-0.022px;">test_alert_1_might_break</span>
<span class="t" style="left:1151.20px;top:629.50px;font-size:12.14px;color:#5a6066;letter-spacing:0.006px;">Fired 137 time(s)</span>
<div class="b card" style="left:86px;top:485px;width:779px;height:211px;"></div>
<span class="t" style="left:101.00px;top:494.70px;font-size:12.53px;color:#1b1e22;-webkit-text-stroke:0.15px #1b1e22;letter-spacing:0.212px;">Alert Activity</span>
<div class="b " style="left:406px;top:532.7px;width:20.7px;height:11.6px;background:#5470c6;border-radius:3px;"></div>
<span class="t" style="left:430.75px;top:533.40px;font-size:10px;color:#333;letter-spacing:0.078px;">test_alert_1_might_break</span>
<span class="t" style="left:110.00px;top:548.00px;font-size:10px;color:#6e7079;">Alert Count</span>
<div class="b " style="left:135.3px;top:570.2px;width:692.2px;height:1.0px;background:#f1f3f6;"></div>
<span class="t" style="left:117.55px;top:565.70px;font-size:10px;color:#6e7079;">50</span>
<div class="b " style="left:135.3px;top:589.4px;width:692.2px;height:1.0px;background:#f1f3f6;"></div>
<span class="t" style="left:117.55px;top:584.90px;font-size:10px;color:#6e7079;">40</span>
<div class="b " style="left:135.3px;top:608.6px;width:692.2px;height:1.0px;background:#f1f3f6;"></div>
<span class="t" style="left:117.55px;top:604.10px;font-size:10px;color:#6e7079;">30</span>
<div class="b " style="left:135.3px;top:627.8px;width:692.2px;height:1.0px;background:#f1f3f6;"></div>
<span class="t" style="left:117.55px;top:623.30px;font-size:10px;color:#6e7079;">20</span>
<div class="b " style="left:135.3px;top:647.0px;width:692.2px;height:1.0px;background:#f1f3f6;"></div>
<span class="t" style="left:117.55px;top:642.50px;font-size:10px;color:#6e7079;">10</span>
<div class="b " style="left:135.3px;top:666.2px;width:692.2px;height:1.0px;background:#e3e6eb;"></div>
<span class="t" style="left:123.05px;top:661.70px;font-size:10px;color:#6e7079;">0</span>
<div class="b " style="left:162.3px;top:624.5px;width:119.0px;height:42.2px;background:#5470c6;"></div>
<span class="t" style="left:206.93px;top:673.00px;font-size:10px;color:#6e7079;">Jan 30</span>
<div class="b " style="left:335.3px;top:578.4px;width:119.0px;height:88.3px;background:#5470c6;"></div>
<span class="t" style="left:379.93px;top:673.00px;font-size:10px;color:#6e7079;">Jan 31</span>
<div class="b " style="left:508.3px;top:572.6px;width:119.0px;height:94.1px;background:#5470c6;"></div>
<span class="t" style="left:554.92px;top:673.00px;font-size:10px;color:#6e7079;">Feb 1</span>
<div class="b " style="left:681.3px;top:626.4px;width:119.0px;height:40.3px;background:#5470c6;"></div>
<span class="t" style="left:727.92px;top:673.00px;font-size:10px;color:#6e7079;">Feb 2</span>
<div class="b " style="left:134.8px;top:666.7px;width:1.0px;height:4.3px;background:#dfe2e8;"></div>
<div class="b " style="left:307.9px;top:666.7px;width:1.0px;height:4.3px;background:#dfe2e8;"></div>
<div class="b " style="left:480.9px;top:666.7px;width:1.0px;height:4.3px;background:#dfe2e8;"></div>
<div class="b " style="left:654.0px;top:666.7px;width:1.0px;height:4.3px;background:#dfe2e8;"></div>
<div class="b " style="left:827.0px;top:666.7px;width:1.0px;height:4.3px;background:#dfe2e8;"></div>
<div class="b " style="left:0px;top:708px;width:1280px;height:1px;background:rgba(0,0,0,.5);"></div>
<div class="b " style="left:0px;top:0px;width:1280px;height:11px;background:#000;"></div>
<div class="b " style="left:0px;top:709px;width:1280px;height:11px;background:#000;"></div>
</div>
</body>
</html>
